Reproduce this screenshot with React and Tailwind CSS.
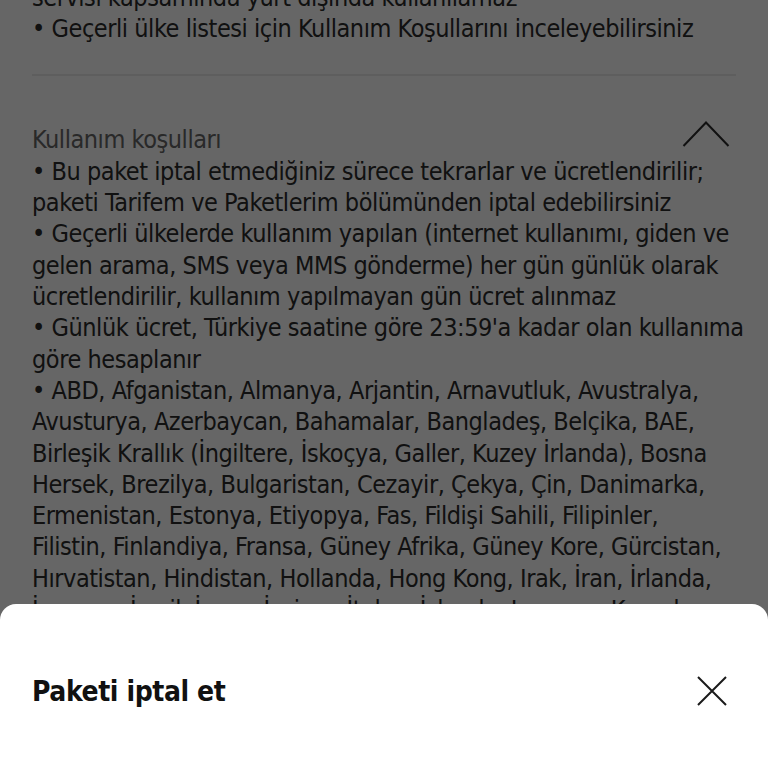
const terms = [
  '• Bu paket iptal etmediğiniz sürece tekrarlar ve ücretlendirilir;',
  'paketi Tarifem ve Paketlerim bölümünden iptal edebilirsiniz',
  '• Geçerli ülkelerde kullanım yapılan (internet kullanımı, giden ve',
  'gelen arama, SMS veya MMS gönderme) her gün günlük olarak',
  'ücretlendirilir, kullanım yapılmayan gün ücret alınmaz',
  "• Günlük ücret, Türkiye saatine göre 23:59'a kadar olan kullanıma",
  'göre hesaplanır',
  '• ABD, Afganistan, Almanya, Arjantin, Arnavutluk, Avustralya,',
  'Avusturya, Azerbaycan, Bahamalar, Bangladeş, Belçika, BAE,',
  'Birleşik Krallık (İngiltere, İskoçya, Galler, Kuzey İrlanda), Bosna',
  'Hersek, Brezilya, Bulgaristan, Cezayir, Çekya, Çin, Danimarka,',
  'Ermenistan, Estonya, Etiyopya, Fas, Fildişi Sahili, Filipinler,',
  'Filistin, Finlandiya, Fransa, Güney Afrika, Güney Kore, Gürcistan,',
  'Hırvatistan, Hindistan, Hollanda, Hong Kong, Irak, İran, İrlanda,',
  'İspanya, İsrail, İsveç, İsviçre, İtalya, İzlanda, Japonya, Kanada,',
]

function Chevron() {
  return (
    <svg width="48" height="28" viewBox="0 0 48 28" fill="none" stroke="currentColor" strokeWidth="2" className="text-[#2b2b2b]">
      <path d="M1.5 26 L24 2.5 L46.5 26" />
    </svg>
  )
}

function CloseIcon() {
  return (
    <svg width="32" height="32" viewBox="0 0 32 32" fill="none" stroke="currentColor" strokeWidth="2" className="text-[#1a1a1a]">
      <path d="M2 2 L30 30 M30 2 L2 30" />
    </svg>
  )
}

export default function App() {
  return (
    <div
      className="relative h-screen w-full overflow-hidden bg-white text-[#2b2b2b]"
      style={{ fontFamily: "'DejaVu Sans Condensed', 'Liberation Sans Narrow', Roboto, sans-serif" }}
    >
      {/* scrolled package details */}
      <div className="-mt-[18px] px-8 text-[25px] leading-[31.3px] tracking-[-0.45px]">
        <p className="whitespace-nowrap">servisi kapsamında yurt dışında kullanılamaz</p>
        <p className="whitespace-nowrap">• Geçerli ülke listesi için Kullanım Koşullarını inceleyebilirsiniz</p>

        <div className="mt-[29px] h-[2px] bg-[#ececec]" />

        <div className="mt-[48px] flex items-center justify-between">
          <span className="whitespace-nowrap text-[#666]">Kullanım koşulları</span>
          <div className="mr-[6px] -mt-[11px]">
            <Chevron />
          </div>
        </div>
        <div className="mt-[1px]">
          {terms.map((line) => (
            <p key={line} className="whitespace-nowrap">{line}</p>
          ))}
        </div>
      </div>

      {/* dim layer behind the sheet */}
      <div className="absolute inset-0 bg-black/60" />

      {/* bottom sheet */}
      <div className="absolute inset-x-0 bottom-0 h-[164px] rounded-t-2xl bg-white px-8 pt-[67px]">
        <div className="flex items-center justify-between">
          <h2 className="text-[28px] font-bold tracking-[-0.4px] text-[#111]">Paketi iptal et</h2>
          <div className="mr-[8px] -mt-[3px]">
            <CloseIcon />
          </div>
        </div>
      </div>
    </div>
  )
}
